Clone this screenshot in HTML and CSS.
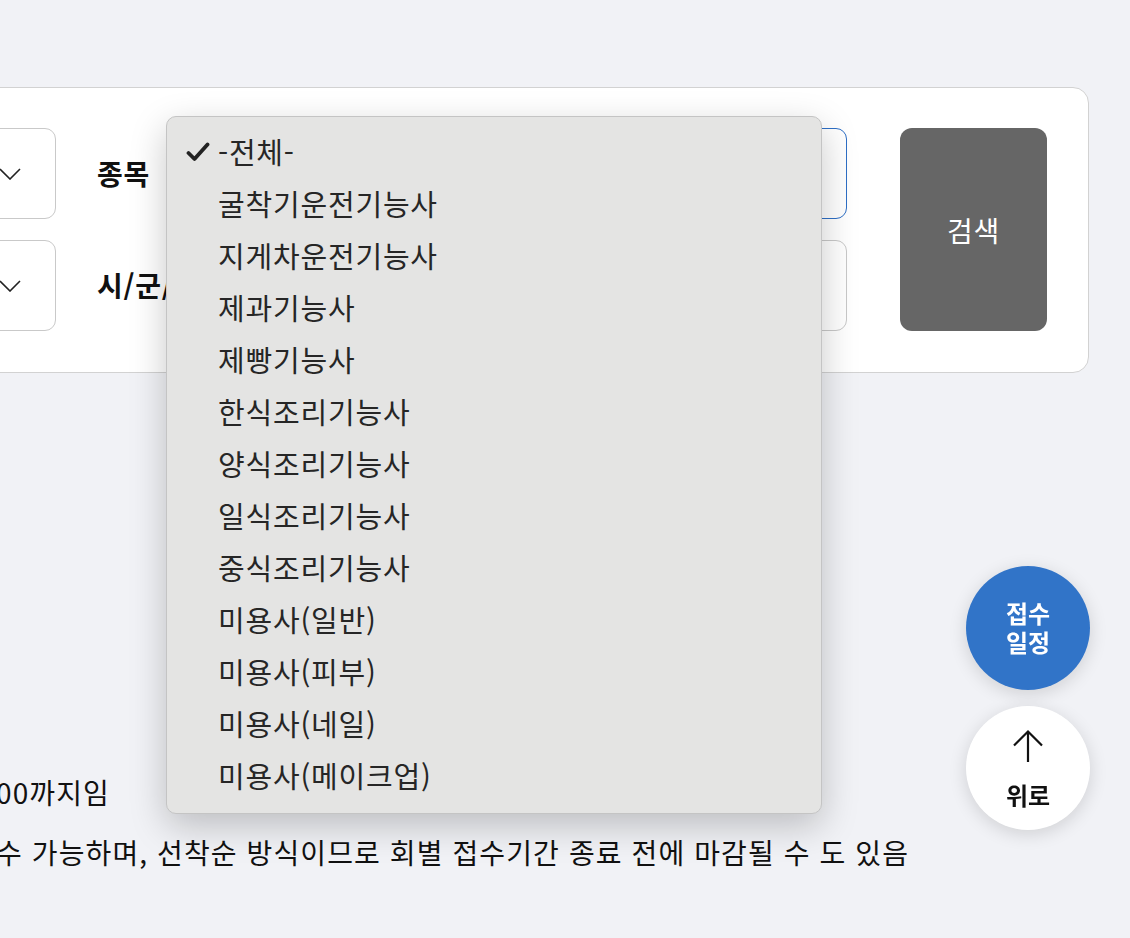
FILE: index.html
```html
<!DOCTYPE html>
<html lang="ko">
<head>
    <meta charset="UTF-8">
    <meta name="viewport" content="width=device-width, initial-scale=1.0">
    <title>접수 현황 검색</title>
    <link rel="stylesheet" href="styles.css">
</head>
<body>
    <div class="page">
        <form class="search-card" id="searchForm">
            <div class="select-box">
                <svg class="chevron" viewBox="0 0 22 12" width="22" height="12"><path d="M1 1 L11 11 L21 1" fill="none" stroke="#222" stroke-width="1.6"/></svg>
            </div>
            <label class="field-label" for="jongmok">종목</label>
            <div class="select-box select-focus" id="jongmok"></div>
            <button type="button" class="search-btn">검색</button>

            <div class="select-box">
                <svg class="chevron" viewBox="0 0 22 12" width="22" height="12"><path d="M1 1 L11 11 L21 1" fill="none" stroke="#222" stroke-width="1.6"/></svg>
            </div>
            <label class="field-label" for="sigungu">시/군/구</label>
            <div class="select-box" id="sigungu"></div>
        </form>

        <div class="notice">
            <p class="notice-line">00까지임</p>
            <p class="notice-line">수 가능하며, 선착순 방식이므로 회별 접수기간 종료 전에 마감될 수 도 있음</p>
        </div>
    </div>

    <ul class="dropdown">
        <li class="option selected">
            <svg class="check" viewBox="0 0 24 20" width="24" height="20"><path d="M2.5 11 L8.5 17 L21.5 2.5" fill="none" stroke="#222" stroke-width="3.8" stroke-linecap="round" stroke-linejoin="round"/></svg>
            -전체-
        </li>
        <li class="option">굴착기운전기능사</li>
        <li class="option">지게차운전기능사</li>
        <li class="option">제과기능사</li>
        <li class="option">제빵기능사</li>
        <li class="option">한식조리기능사</li>
        <li class="option">양식조리기능사</li>
        <li class="option">일식조리기능사</li>
        <li class="option">중식조리기능사</li>
        <li class="option">미용사(일반)</li>
        <li class="option">미용사(피부)</li>
        <li class="option">미용사(네일)</li>
        <li class="option">미용사(메이크업)</li>
    </ul>

    <div class="quick-menu">
        <a class="quick-btn quick-schedule" href="#">접수<br>일정</a>
        <a class="quick-btn quick-top" href="#">
            <svg viewBox="0 0 34 34" width="34" height="34"><path d="M17 33 V2.5 M3 16.5 L17 2.5 L31 16.5" fill="none" stroke="#111" stroke-width="2.2"/></svg>
            <span>위로</span>
        </a>
    </div>
</body>
</html>
```

FILE: styles.css
```css
body {
    margin: 0;
    background: #f1f2f6;
    font-family: "Noto Sans CJK KR", "Noto Sans", sans-serif;
    color: #111;
    overflow: hidden;
}
.page {
    padding-top: 87px;
    margin-left: -60px;
}
.search-card {
    width: 1149px;
    box-sizing: border-box;
    background: #fff;
    border: 1px solid #d2d2d2;
    border-radius: 16px;
    padding: 40px 41px 41px 20px;
    display: grid;
    grid-template-columns: 95px 161px 630px 200px;
    grid-template-rows: 91px 91px;
    row-gap: 21px;
    align-items: center;
}
.select-box {
    height: 91px;
    box-sizing: border-box;
    border: 1px solid #c9c9c9;
    border-radius: 11px;
    display: flex;
    align-items: center;
    justify-content: flex-end;
    padding-right: 34px;
}
.select-focus {
    border: 1.5px solid #2e6fc6;
}
.field-label {
    padding-left: 41px;
    padding-bottom: 2px;
    font-size: 28px;
    font-weight: 700;
    letter-spacing: 0.8px;
    white-space: nowrap;
}
.search-btn {
    grid-row: 1 / span 2;
    grid-column: 4;
    justify-self: end;
    align-self: stretch;
    width: 147px;
    border: none;
    border-radius: 12px;
    background: #666;
    color: #fff;
    font-family: inherit;
    font-size: 28px;
    letter-spacing: 0.8px;
    cursor: pointer;
}
.notice {
    margin-top: 389px;
    padding-left: 56px;
}
.notice-line {
    margin: 0;
    font-size: 28px;
    line-height: 60px;
    letter-spacing: 1.1px;
    white-space: nowrap;
}
.dropdown {
    position: absolute;
    left: 166px;
    top: 116px;
    width: 656px;
    box-sizing: border-box;
    margin: 0;
    padding: 8px 0 12px;
    list-style: none;
    background: #e4e4e3;
    border: 1px solid #c4c4c4;
    border-radius: 10px;
    box-shadow: 0 12px 36px rgba(0, 0, 0, 0.22);
}
.option {
    position: relative;
    height: 52px;
    line-height: 52px;
    padding-left: 51px;
    font-size: 29px;
    letter-spacing: 0.8px;
    color: #262626;
}
.check {
    position: absolute;
    left: 19px;
    top: 17px;
}
.quick-menu {
    position: fixed;
    right: 40px;
    top: 566px;
    display: flex;
    flex-direction: column;
    gap: 16px;
}
.quick-btn {
    width: 124px;
    height: 124px;
    box-sizing: border-box;
    border-radius: 50%;
    display: flex;
    flex-direction: column;
    align-items: center;
    justify-content: center;
    text-decoration: none;
    font-weight: 700;
    font-size: 24px;
    box-shadow: 0 4px 18px rgba(0, 0, 0, 0.14);
}
.quick-schedule {
    background: #3174c8;
    color: #fff;
    line-height: 29px;
    text-align: center;
    padding-bottom: 2px;
}
.quick-top {
    justify-content: flex-start;
    padding-top: 23px;
    background: #fff;
    color: #111;
    line-height: 30px;
}
.quick-top span {
    margin-top: 17px;
}
```
